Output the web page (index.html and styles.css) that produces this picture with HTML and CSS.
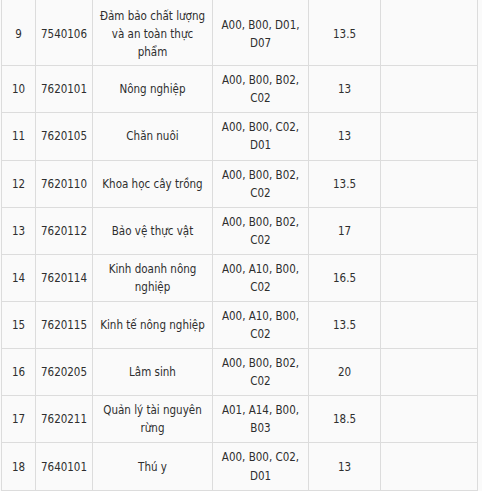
FILE: index.html
```html
<!DOCTYPE html>
<html lang="vi">
<head>
<meta charset="utf-8">
<link rel="stylesheet" href="styles.css">
</head>
<body>
<div class="table">
  <div class="cell">9</div><div class="cell">7540106</div><div class="cell">Đảm bảo chất lượng và an toàn thực phẩm</div><div class="cell">A00, B00, D01, D07</div><div class="cell">13.5</div><div class="cell"></div>
  <div class="cell">10</div><div class="cell">7620101</div><div class="cell">Nông nghiệp</div><div class="cell">A00, B00, B02, C02</div><div class="cell">13</div><div class="cell"></div>
  <div class="cell">11</div><div class="cell">7620105</div><div class="cell">Chăn nuôi</div><div class="cell">A00, B00, C02, D01</div><div class="cell">13</div><div class="cell"></div>
  <div class="cell">12</div><div class="cell">7620110</div><div class="cell">Khoa học cây trồng</div><div class="cell">A00, B00, B02, C02</div><div class="cell">13.5</div><div class="cell"></div>
  <div class="cell">13</div><div class="cell">7620112</div><div class="cell">Bảo vệ thực vật</div><div class="cell">A00, B00, B02, C02</div><div class="cell">17</div><div class="cell"></div>
  <div class="cell">14</div><div class="cell">7620114</div><div class="cell">Kinh doanh nông nghiệp</div><div class="cell">A00, A10, B00, C02</div><div class="cell">16.5</div><div class="cell"></div>
  <div class="cell">15</div><div class="cell">7620115</div><div class="cell">Kinh tế nông nghiệp</div><div class="cell">A00, A10, B00, C02</div><div class="cell">13.5</div><div class="cell"></div>
  <div class="cell">16</div><div class="cell">7620205</div><div class="cell">Lâm sinh</div><div class="cell">A00, B00, B02, C02</div><div class="cell">20</div><div class="cell"></div>
  <div class="cell">17</div><div class="cell">7620211</div><div class="cell">Quản lý tài nguyên rừng</div><div class="cell">A01, A14, B00, B03</div><div class="cell">18.5</div><div class="cell"></div>
  <div class="cell">18</div><div class="cell">7640101</div><div class="cell">Thú y</div><div class="cell">A00, B00, C02, D01</div><div class="cell">13</div><div class="cell"></div>
  <div class="cell"></div><div class="cell"></div><div class="cell"></div><div class="cell"></div><div class="cell"></div><div class="cell"></div>
</div>
</body>
</html>
```

FILE: styles.css
```css
html, body {
  margin: 0;
  padding: 0;
  background: #fafafa;
}
body {
  padding-left: 1px;
  font-family: "DejaVu Sans Condensed", "DejaVu Sans", sans-serif;
  font-stretch: condensed;
  font-size: 11.5px;
  color: #2e2e2e;
}
.table {
  display: grid;
  grid-template-columns: 33px 56px 119px 95px 71px 96px;
  gap: 1px;
  padding: 0 1px 1px 1px;
  background: #dcdcdc;
  width: max-content;
}
.cell {
  background: #fafafa;
  display: flex;
  align-items: center;
  justify-content: center;
  text-align: center;
  line-height: 18.08px;
  padding: 5px 5px;
  min-height: 36px;
}
.table > .cell:nth-child(-n+6) {
  padding-top: 6.5px;
  padding-bottom: 4.5px;
}
```
